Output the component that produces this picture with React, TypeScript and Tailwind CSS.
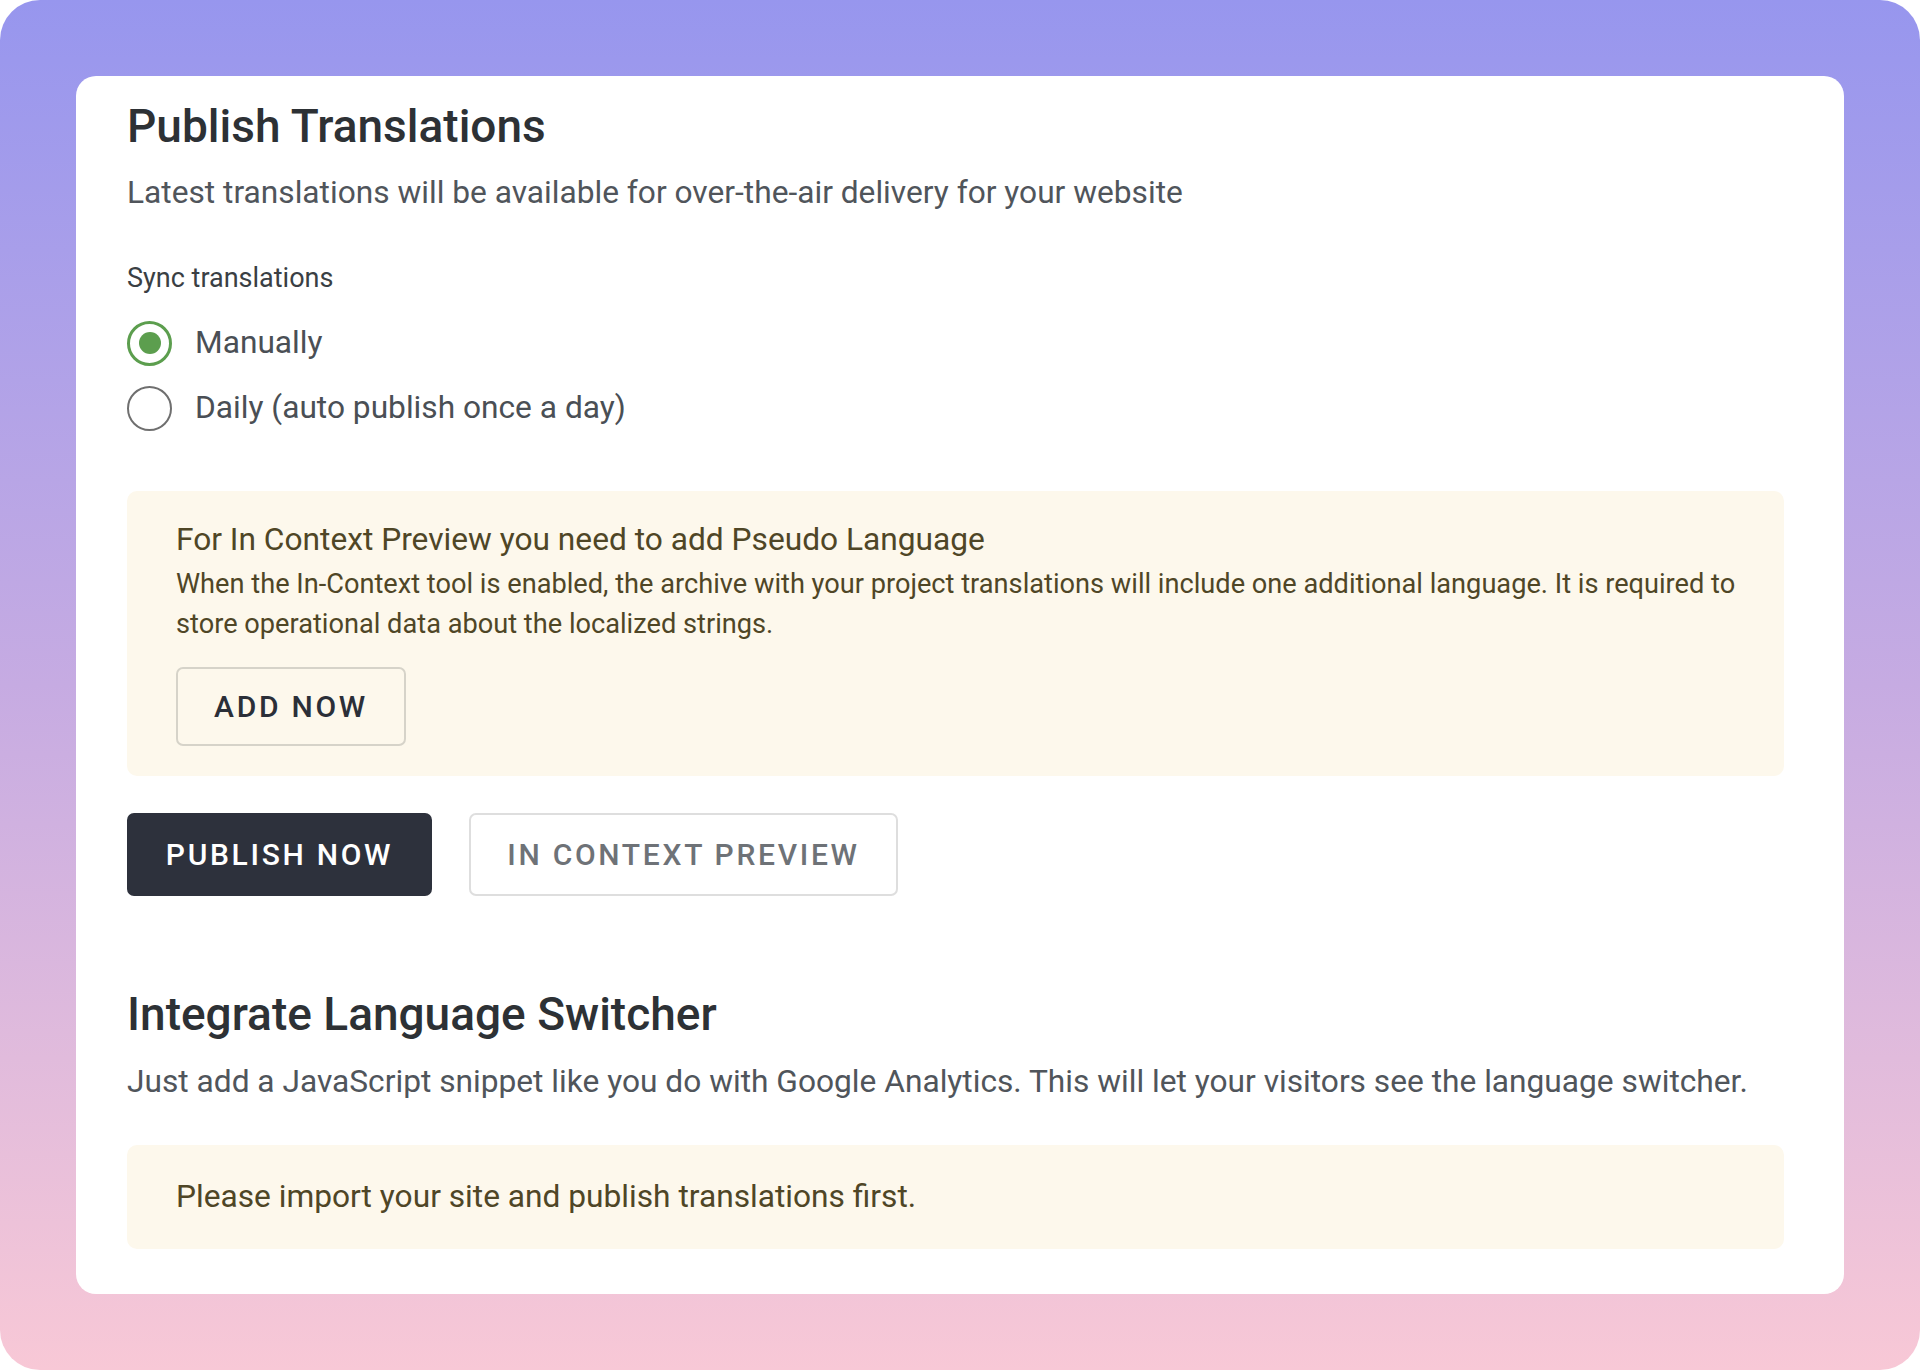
const options = [
  { label: "Manually", checked: true },
  { label: "Daily (auto publish once a day)", checked: false }
];

function Radio({ checked }: { checked: boolean }) {
  return (
    <span
      className={
        checked
          ? "flex h-[45px] w-[45px] items-center justify-center rounded-full border-[3px] border-[#5c9e4e]"
          : "flex h-[45px] w-[45px] items-center justify-center rounded-full border-[2.5px] border-[#6f6f6f]"
      }
    >
      {checked && <span className="h-[22px] w-[22px] rounded-full bg-[#5c9e4e]" />}
    </span>
  );
}

export default function App() {
  return (
    <div className="h-[1370px] w-full bg-white font-['Roboto','Liberation_Sans',sans-serif]">
      <div className="h-full rounded-[40px] bg-linear-to-b from-[#9796ee] via-[#c6abe2] to-[#f8c8d6] p-[76px]">
        <section className="h-full rounded-[20px] bg-white pl-[51px] pr-[60px] pt-[26px]">
          <h1 className="text-[46px] font-medium leading-[48px] text-[#2d3135]">Publish Translations</h1>
          <p className="mt-[23px] text-[31.7px] leading-[40px] text-[#50555b]">
            Latest translations will be available for over-the-air delivery for your website
          </p>

          <p className="mt-[49px] text-[27px] leading-[32px] text-[#3a3f44]">Sync translations</p>
          <div className="mt-[21px] flex flex-col gap-[9px]">
            {options.map((o) => (
              <label key={o.label} className="flex h-[56px] items-center gap-[23px]">
                <Radio checked={o.checked} />
                <span className="text-[31.7px] text-[#4a4f55]">{o.label}</span>
              </label>
            ))}
          </div>

          <div className="mt-[55px] rounded-[10px] bg-[#fdf8ec] pb-[30px] pl-[49px] pr-[40px] pt-[31px] text-[#4f4626]">
            <h2 className="text-[31.7px] leading-[36px]">For In Context Preview you need to add Pseudo Language</h2>
            <p className="mt-[6px] text-[27.2px] leading-[40px]">
              When the In-Context tool is enabled, the archive with your project translations will include one additional
              language. It is required to store operational data about the localized strings.
            </p>
            <button className="mt-[23px] flex h-[79px] w-[230px] items-center justify-center rounded-[7px] border-2 border-[#d6d3c9] text-[30px] font-medium tracking-[0.09em] text-[#2b2f38]">
              ADD NOW
            </button>
          </div>

          <div className="mt-[37px] flex gap-[37px]">
            <button className="flex h-[83px] w-[305px] items-center justify-center rounded-[7px] bg-[#2d313c] text-[30px] font-medium tracking-[0.09em] text-white">
              PUBLISH NOW
            </button>
            <button className="flex h-[83px] w-[429px] items-center justify-center rounded-[7px] border-2 border-[#dedede] text-[30px] font-medium tracking-[0.09em] text-[#6e7277]">
              IN CONTEXT PREVIEW
            </button>
          </div>

          <h2 className="mt-[94px] text-[46px] font-medium leading-[48px] text-[#2d3135]">Integrate Language Switcher</h2>
          <p className="mt-[24px] text-[31.7px] leading-[40px] text-[#50555b]">
            Just add a JavaScript snippet like you do with Google Analytics. This will let your visitors see the language
            switcher.
          </p>

          <div className="mt-[43px] rounded-[10px] bg-[#fdf8ec] py-[34px] pl-[49px] text-[31.7px] leading-[36px] text-[#4f4626]">
            Please import your site and publish translations first.
          </div>
        </section>
      </div>
    </div>
  );
}
